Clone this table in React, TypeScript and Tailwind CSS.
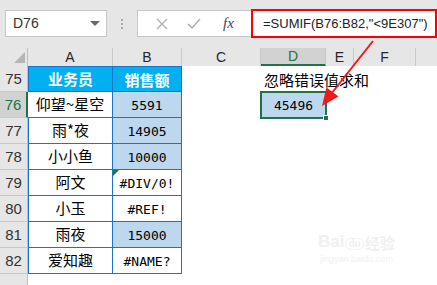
import React from 'react';

const cjk = '"Noto Sans CJK SC", "Noto Sans", sans-serif';
const mono = '"DejaVu Sans Mono", "Liberation Mono", monospace';

type Row = {
  n: number;
  a: string;
  b: string;
  blue?: boolean;
  err?: boolean;
  head?: boolean;
};

const rows: Row[] = [
  { n: 75, a: '业务员', b: '销售额', head: true },
  { n: 76, a: '仰望~星空', b: '5591', blue: true },
  { n: 77, a: '雨*夜', b: '14905', blue: true },
  { n: 78, a: '小小鱼', b: '10000', blue: true },
  { n: 79, a: '阿文', b: '#DIV/0!', err: true },
  { n: 80, a: '小玉', b: '#REF!' },
  { n: 81, a: '雨夜', b: '15000', blue: true },
  { n: 82, a: '爱知趣', b: '#NAME?' },
];

const cols = [
  { l: 'A', w: 'w-[85px]' },
  { l: 'B', w: 'w-[69px]' },
  { l: 'C', w: 'w-[79px]' },
  { l: 'D', w: 'w-[65px]', sel: true },
  { l: 'E', w: 'w-[28px]' },
  { l: 'F', w: 'w-[62px]' },
];

function FormulaBar() {
  return (
    <div className="h-[48px] bg-[#e6e6e6] flex items-start pt-[10px]">
      {/* name box */}
      <div className="ml-[5px] w-[102px] h-[27px] bg-white border border-[#c6c6c6] flex items-center justify-between pl-[7px] pr-[6px]">
        <span className="text-[14px] text-[#333]" style={{ fontFamily: '"Liberation Sans", sans-serif' }}>D76</span>
        <svg width="10" height="6" viewBox="0 0 10 6"><path d="M0 0h10L5 5z" fill="#6a6a6a" /></svg>
      </div>
      <div className="w-[30px] h-[27px] flex flex-col items-center justify-center gap-[2px]">
        <span className="w-[2px] h-[2px] bg-[#a8a8a8]" />
        <span className="w-[2px] h-[2px] bg-[#a8a8a8]" />
        <span className="w-[2px] h-[2px] bg-[#a8a8a8]" />
      </div>
      {/* formula */}
      <div className="flex-1 h-[27px] bg-white border border-[#c6c6c6] border-r-0 flex">
        <div className="w-[113px] flex items-center">
          <svg className="ml-[18px]" width="12" height="12" viewBox="0 0 12 12">
            <path d="M1 1l10 10M11 1L1 11" stroke="#b0b0b0" strokeWidth="1.4" />
          </svg>
          <svg className="ml-[19px]" width="14" height="12" viewBox="0 0 14 12">
            <path d="M1 6l4 4 8-9" stroke="#b0b0b0" strokeWidth="1.5" fill="none" />
          </svg>
          <span className="ml-[22px] text-[15px] italic text-[#444]" style={{ fontFamily: '"Liberation Serif", serif' }}>fx</span>
        </div>
        <div className="flex-1 -mt-[2px] h-[29px] border-2 border-[#ff0000] flex items-center pl-[10px]">
          <span className="text-[13px] text-[#222] whitespace-nowrap" style={{ fontFamily: '"Liberation Sans", sans-serif' }}>
            =SUMIF(B76:B82,"&lt;9E307")
          </span>
        </div>
      </div>
    </div>
  );
}

function ColumnHeader() {
  return (
    <div className="h-[18px] flex bg-[#e6e6e6]" style={{ fontFamily: '"Liberation Sans", sans-serif' }}>
      <div className="w-[28px] border-r border-[#bfbfbf] relative">
        <svg className="absolute left-[14px] top-[4px]" width="11" height="11" viewBox="0 0 11 11">
          <path d="M11 0v11H0z" fill="#b5b5b5" />
        </svg>
      </div>
      {cols.map((c) => (
        <div
          key={c.l}
          className={`${c.w} border-r border-[#c8c8c8] flex items-center justify-center text-[14px] ${
            c.sel ? 'bg-[#d2d2d2] border-b-2 border-b-[#217346] text-[#217346]' : 'text-[#262626]'
          }`}
        >
          {c.l}
        </div>
      ))}
      <div className="flex-1" />
    </div>
  );
}

function DataRow({ r }: { r: Row }) {
  const rowSel = r.n === 76;
  return (
    <div className="h-[26px] flex">
      <div
        className={`w-[28px] shrink-0 border-b border-[#c8c8c8] flex items-end justify-center pb-[1px] text-[15px] ${
          rowSel ? 'bg-[#d2d2d2] border-r-2 border-r-[#217346] text-[#217346]' : 'bg-[#e6e6e6] border-r border-r-[#bfbfbf] text-[#333]'
        }`}
        style={{ fontFamily: '"Liberation Sans", sans-serif' }}
      >
        {r.n}
      </div>
      {/* A */}
      <div
        className={`w-[85px] shrink-0 border-b border-r border-[#1a75c8] flex items-center justify-center text-[15px] ${
          r.head ? 'bg-[#00b0f0] text-white font-bold border-t' : 'bg-white text-black'
        } ${rowSel ? '' : 'border-l'}`}
        style={{ fontFamily: cjk }}
      >
        {r.a}
      </div>
      {/* B */}
      <div
        className={`w-[69px] shrink-0 border-b border-r border-[#1a75c8] flex items-center justify-center relative ${
          r.head ? 'bg-[#00b0f0] text-white font-bold border-t text-[15px]' : r.blue ? 'bg-[#bdd7ee] text-black text-[13px]' : 'bg-white text-black text-[13px]'
        }`}
        style={{ fontFamily: r.head ? cjk : mono }}
      >
        {r.err && (
          <svg className="absolute left-0 top-0" width="6" height="6" viewBox="0 0 6 6">
            <path d="M0 0h6L0 6z" fill="#1f7a3d" />
          </svg>
        )}
        <span className="pt-[2px]">{r.b}</span>
      </div>
      {/* C */}
      <div className="w-[79px] shrink-0" />
      {/* D */}
      <div className="w-[65px] shrink-0 relative">
        {r.n === 75 && (
          <span className="absolute left-[3px] bottom-[1px] whitespace-nowrap text-[15px] text-black" style={{ fontFamily: cjk }}>
            忽略错误值求和
          </span>
        )}
        {rowSel && (
          <div className="absolute -left-[1px] -top-[1px] -right-[1px] -bottom-[1px] border-2 border-[#217346] bg-[#bdd7ee] flex items-center justify-center text-[13px] text-black" style={{ fontFamily: mono }}>
            <span className="pt-[2px]">45496</span>
            <span className="absolute -right-[4px] -bottom-[4px] w-[6px] h-[6px] bg-[#217346] border border-white" />
          </div>
        )}
      </div>
      <div className="flex-1" />
    </div>
  );
}

export default function App() {
  return (
    <div className="w-[437px] h-[285px] bg-white overflow-hidden relative">
      <FormulaBar />
      <ColumnHeader />
      {rows.map((r) => (
        <DataRow key={r.n} r={r} />
      ))}
      <div className="h-[20px] flex">
        <div className="w-[28px] bg-[#e6e6e6] border-r border-[#bfbfbf]" />
      </div>

      {/* red arrow */}
      <svg className="absolute left-0 top-0 pointer-events-none" width="437" height="285" viewBox="0 0 437 285">
        <line x1="373" y1="41" x2="331" y2="94" stroke="#f01818" strokeWidth="2" />
        <path d="M322 106L326.5 87.5L338.5 96.5Z" fill="#f01818" />
      </svg>

      {/* watermark */}
      <div className="absolute left-[318px] top-[233px] flex flex-col items-center text-[#f0f0f0] pointer-events-none">
        <div className="flex items-end gap-[1px] text-[17px] leading-none font-bold" style={{ fontFamily: '"Liberation Sans", "Noto Sans CJK SC", sans-serif' }}>
          <span>Bai</span>
          <span className="text-[10px] border border-[#f0f0f0] rounded-full px-[2px]">du</span>
          <span className="text-[15px]" style={{ fontFamily: cjk }}>经验</span>
        </div>
        <span className="text-[9px] mt-[3px]" style={{ fontFamily: '"Liberation Sans", sans-serif' }}>jingyan.baidu.com</span>
      </div>
    </div>
  );
}
